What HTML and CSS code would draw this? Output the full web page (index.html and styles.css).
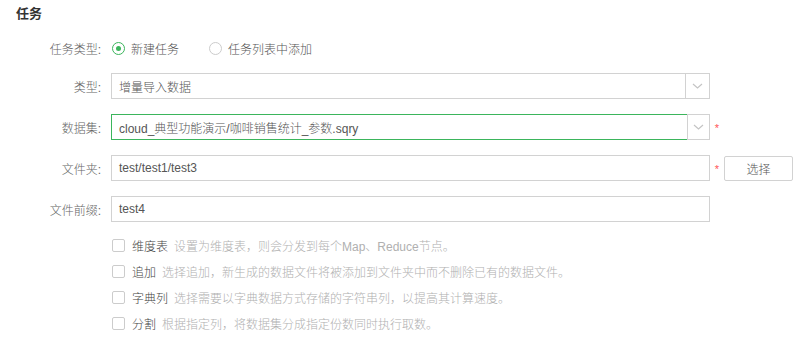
FILE: index.html
```html
<!DOCTYPE html>
<html lang="zh-CN">

<head>
    <meta charset="UTF-8">
    <title>任务</title>
    <link rel="stylesheet" href="styles.css">
</head>

<body>

    <div class="panel">
        <h3 class="panel-title">任务</h3>

        <!-- Task type -->
        <div class="row row-radio">
            <span class="label">任务类型:</span>
            <label class="radio checked"><span class="radio-dot"></span>新建任务</label>
            <label class="radio"><span class="radio-dot"></span>任务列表中添加</label>
        </div>

        <!-- Type -->
        <div class="row">
            <span class="label">类型:</span>
            <div class="combo">
                <span class="combo-text">增量导入数据</span>
                <span class="combo-arrow"><svg width="11" height="6" viewBox="0 0 11 6"><path d="M1 1l4.5 4L10 1" fill="none" stroke="#c4c4c4" stroke-width="1.2"/></svg></span>
            </div>
        </div>

        <!-- Dataset -->
        <div class="row">
            <span class="label">数据集:</span>
            <div class="combo active">
                <span class="combo-text">cloud_典型功能演示/咖啡销售统计_参数.sqry</span>
                <span class="combo-arrow"><svg width="11" height="6" viewBox="0 0 11 6"><path d="M1 1l4.5 4L10 1" fill="none" stroke="#c4c4c4" stroke-width="1.2"/></svg></span>
            </div>
            <span class="required">*</span>
        </div>

        <!-- Folder -->
        <div class="row">
            <span class="label">文件夹:</span>
            <div class="field">test/test1/test3</div>
            <span class="required">*</span>
            <button class="btn">选择</button>
        </div>

        <!-- Prefix -->
        <div class="row">
            <span class="label">文件前缀:</span>
            <div class="field">test4</div>
        </div>

        <!-- Options -->
        <div class="options">
            <label class="check"><span class="check-box"></span><span class="check-name">维度表</span><span class="check-desc">设置为维度表，则会分发到每个Map、Reduce节点。</span></label>
            <label class="check"><span class="check-box"></span><span class="check-name">追加</span><span class="check-desc">选择追加，新生成的数据文件将被添加到文件夹中而不删除已有的数据文件。</span></label>
            <label class="check"><span class="check-box"></span><span class="check-name">字典列</span><span class="check-desc">选择需要以字典数据方式存储的字符串列，以提高其计算速度。</span></label>
            <label class="check"><span class="check-box"></span><span class="check-name">分割</span><span class="check-desc">根据指定列，将数据集分成指定份数同时执行取数。</span></label>
        </div>
    </div>

</body>

</html>
```

FILE: styles.css
```css
body {
    margin: 0;
    background: #fff;
    font-family: 'Liberation Sans', 'Noto Sans CJK SC', sans-serif;
    font-size: 12px;
    font-weight: 300;
    color: #555;
}

.panel {
    padding: 6px 0 0 0;
}

.panel-title {
    margin: 0 0 13px 16px;
    font-size: 13px;
    line-height: 16px;
    font-weight: bold;
    color: #333;
}

.row {
    display: flex;
    align-items: center;
    height: 26px;
    margin-bottom: 15px;
}

.row-radio {
    margin-bottom: 12px;
}

.label {
    width: 101px;
    margin-right: 10px;
    text-align: right;
    color: #666;
    flex-shrink: 0;
}

/* radios */
.radio {
    display: flex;
    align-items: center;
    margin-right: 29px;
    margin-left: 1px;
    color: #555;
}

.radio-dot {
    width: 11px;
    height: 11px;
    border: 1px solid #ccc;
    border-radius: 50%;
    margin-right: 6px;
    position: relative;
    box-sizing: content-box;
}

.radio.checked .radio-dot {
    border-color: #3bb55c;
}

.radio.checked .radio-dot::after {
    content: '';
    position: absolute;
    left: 3px;
    top: 3px;
    width: 5px;
    height: 5px;
    border-radius: 50%;
    background: #3bb55c;
}

/* inputs */
.combo, .field {
    width: 599px;
    height: 26px;
    box-sizing: border-box;
    border: 1px solid #d2d2d2;
    display: flex;
    align-items: center;
    flex-shrink: 0;
}

.field {
    padding-left: 7px;
}

.combo-text {
    flex: 1;
    padding-left: 7px;
}

.combo-arrow {
    width: 23px;
    height: 100%;
    border-left: 1px solid #d2d2d2;
    display: flex;
    align-items: center;
    justify-content: center;
}

.combo.active {
    border-color: #3bb55c;
}

.combo.active .combo-arrow {
    height: calc(100% + 2px);
    margin-right: -1px;
    border: 1px solid #d2d2d2;
    box-sizing: border-box;
}

.required {
    width: 14px;
    text-align: center;
    color: #f55;
    font-size: 11px;
    line-height: 12px;
    padding-top: 2px;
}

.btn {
    width: 69px;
    height: 25px;
    border: 1px solid #d2d2d2;
    border-radius: 2px;
    background: #fff;
    color: #555;
    font-family: inherit;
    font-size: 12px;
    font-weight: 300;
    padding: 0;
}

/* checkbox options */
.options {
    padding-left: 112px;
    margin-top: -1px;
}

.check {
    display: flex;
    align-items: center;
    height: 18px;
    margin-bottom: 8px;
}

.check-box {
    width: 11px;
    height: 11px;
    border: 1px solid #ccc;
    border-radius: 2px;
    margin-right: 7px;
    flex-shrink: 0;
}

.check-name {
    color: #444;
    margin-right: 6px;
}

.check-desc {
    color: #b0b0b0;
}
```
